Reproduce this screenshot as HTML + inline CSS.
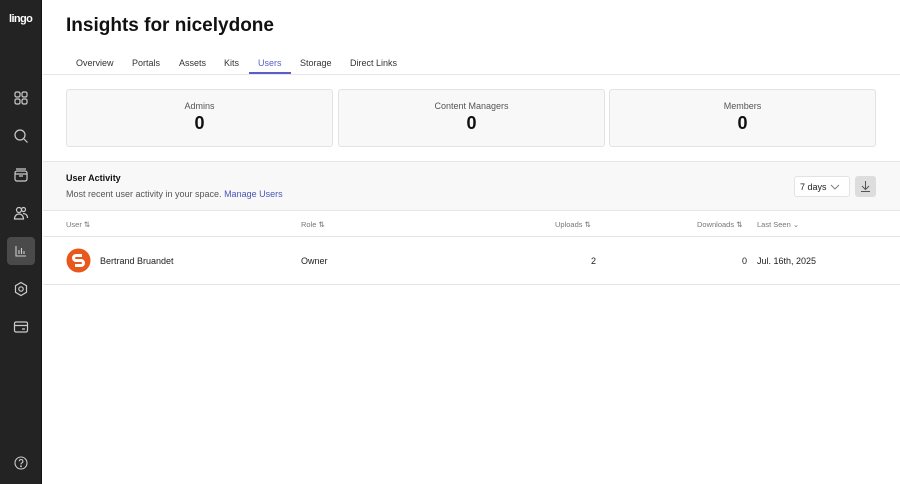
<!DOCTYPE html>
<html><head><style>
*{box-sizing:border-box;margin:0;padding:0}
body{width:900px;height:484px;overflow:hidden;font-family:"Liberation Sans",sans-serif;background:#fff;position:relative;color:#222}
.side{position:absolute;left:0;top:0;width:42px;height:484px;background:#232323;border-right:1px solid #111}
.logo{position:absolute;left:9px;top:13px;color:#fff;font-weight:bold;font-size:11px;letter-spacing:-0.6px}
.ic{position:absolute;left:13px;width:16px;height:16px}
.act{position:absolute;left:7px;top:237px;width:28px;height:28px;background:#4a4a4a;border-radius:4px}
h1{position:absolute;left:66px;top:15px;font-size:19px;font-weight:bold;color:#111}
.tabs{position:absolute;left:43px;top:52px;right:0;height:23px;border-bottom:1px solid #e5e5e5}
.tabs span{position:absolute;top:6px;font-size:9px;color:#333}
.tabs .on{color:#5a5fc8}
.uline{position:absolute;left:249px;top:72px;width:42px;height:2px;background:#5a5fc8}
.card{position:absolute;top:89px;width:267px;height:58px;background:#f8f8f8;border:1px solid #e3e3e3;border-radius:3px;text-align:center}
.card .l{font-size:9px;color:#555;margin-top:11px}
.card .n{font-size:18px;font-weight:bold;margin-top:2px;color:#111}
.act2{position:absolute;left:43px;top:161px;right:0;height:50px;background:#f8f8f8;border-top:1px solid #e5e5e5;border-bottom:1px solid #e5e5e5}
.t{position:absolute;font-size:9px}
.hdr{position:absolute;left:43px;top:211px;right:0;height:26px;border-bottom:1px solid #e5e5e5}
.row{position:absolute;left:43px;top:237px;right:0;height:48px;border-bottom:1px solid #e5e5e5}
.h{color:#777;font-size:7.5px}
</style></head><body>
<div class="side">
<div class="logo">lingo</div>
<svg class="ic" style="top:90px" viewBox="0 0 16 16" fill="none" stroke="#ccc" stroke-width="1.2"><rect x="2" y="2" width="5" height="5" rx="1.5"/><rect x="9" y="2" width="5" height="5" rx="1.5"/><rect x="2" y="9" width="5" height="5" rx="1.5"/><rect x="9" y="9" width="5" height="5" rx="1.5"/></svg>
<svg class="ic" style="top:128px" viewBox="0 0 16 16" fill="none" stroke="#ccc" stroke-width="1.2"><circle cx="7" cy="7" r="5"/><path d="M11 11l3.5 3.5"/></svg>
<svg class="ic" style="top:167px" viewBox="0 0 16 16" fill="none" stroke="#ccc" stroke-width="1.2"><rect x="2" y="4" width="12" height="10" rx="2"/><path d="M3 2h10M2 7h12M6 9h4"/></svg>
<svg class="ic" style="top:205px" viewBox="0 0 16 16" fill="none" stroke="#ccc" stroke-width="1.2"><circle cx="6" cy="5" r="2.5"/><circle cx="10.5" cy="4.5" r="2"/><path d="M1.5 14c0-3 2-5 4.5-5s4.5 2 4.5 5zM10 8.5c2.5 0 4.5 1.5 4.5 4.5"/></svg>
<div class="act"></div>
<svg class="ic" style="top:243px" viewBox="0 0 16 16" fill="none" stroke="#ccc" stroke-width="1.1"><path d="M3 3v10h10M6 11V7M8.5 11V5M11 11V8"/></svg>
<svg class="ic" style="top:281px" viewBox="0 0 16 16" fill="none" stroke="#ccc" stroke-width="1.2"><path d="M8 1.5l5.5 3.2v6.6L8 14.5l-5.5-3.2V4.7z"/><circle cx="8" cy="8" r="2.2"/></svg>
<svg class="ic" style="top:319px" viewBox="0 0 16 16" fill="none" stroke="#ccc" stroke-width="1.2"><rect x="1.5" y="3" width="13" height="10" rx="1.5"/><path d="M1.5 6.5h13M9 10h3"/></svg>
<svg class="ic" style="top:455px" viewBox="0 0 16 16" fill="none" stroke="#ccc" stroke-width="1.1"><circle cx="8" cy="8" r="6"/><path d="M6.3 6.3a1.8 1.8 0 1 1 2.4 1.7c-.5.2-.7.6-.7 1.1v.4"/><circle cx="8" cy="11.3" r=".4" fill="#ccc"/></svg>
</div>
<h1>Insights for nicelydone</h1>
<div class="tabs">
<span style="left:33px">Overview</span><span style="left:89px">Portals</span><span style="left:136px">Assets</span><span style="left:181px">Kits</span><span class="on" style="left:215px">Users</span><span style="left:257px">Storage</span><span style="left:307px">Direct Links</span>
</div>
<div class="uline"></div>
<div class="card" style="left:66px"><div class="l">Admins</div><div class="n">0</div></div>
<div class="card" style="left:338px"><div class="l">Content Managers</div><div class="n">0</div></div>
<div class="card" style="left:609px"><div class="l">Members</div><div class="n">0</div></div>
<div class="act2">
<div class="t" style="left:23px;top:11px;font-weight:bold;color:#111">User Activity</div>
<div class="t" style="left:23px;top:27px;color:#555">Most recent user activity in your space. <span style="color:#4a55b8">Manage Users</span></div>
<div style="position:absolute;left:751px;top:14px;width:56px;height:21px;background:#fff;border:1px solid #e3e3e3;border-radius:3px;font-size:9px;padding:5px 0 0 5px">7 days <svg style="position:absolute;left:35px;top:7px" width="10" height="6" viewBox="0 0 10 6" fill="none" stroke="#777" stroke-width="0.9"><path d="M1 1l4 4 4-4"/></svg></div>
<div style="position:absolute;left:812px;top:14px;width:21px;height:21px;background:#ddd;border-radius:3px"><svg width="21" height="21" viewBox="0 0 21 21" fill="none" stroke="#555" stroke-width="1"><path d="M10.5 5v8M7 10l3.5 3.5L14 10M6 15.5h9"/></svg></div>
</div>
<div class="hdr">
<span class="t h" style="left:23px;top:9px">User &#8645;</span>
<span class="t h" style="left:258px;top:9px">Role &#8645;</span>
<span class="t h" style="left:512px;top:9px">Uploads &#8645;</span>
<span class="t h" style="left:654px;top:9px">Downloads &#8645;</span>
<span class="t h" style="left:714px;top:9px">Last Seen &#8964;</span>
</div>
<div class="row">
<svg style="position:absolute;left:23px;top:11px" width="25" height="25" viewBox="0 0 25 25"><circle cx="12.5" cy="12.5" r="12" fill="#e8581c"/><path d="M16 7.5H10a2.5 2.5 0 0 0 0 5h5a2.5 2.5 0 0 1 0 5H9" fill="none" stroke="#fff" stroke-width="3"/></svg>
<span class="t" style="left:57px;top:19px">Bertrand Bruandet</span>
<span class="t" style="left:258px;top:19px">Owner</span>
<span class="t" style="left:548px;top:19px">2</span>
<span class="t" style="left:699px;top:19px">0</span>
<span class="t" style="left:714px;top:19px">Jul. 16th, 2025</span>
</div>
</body></html>
